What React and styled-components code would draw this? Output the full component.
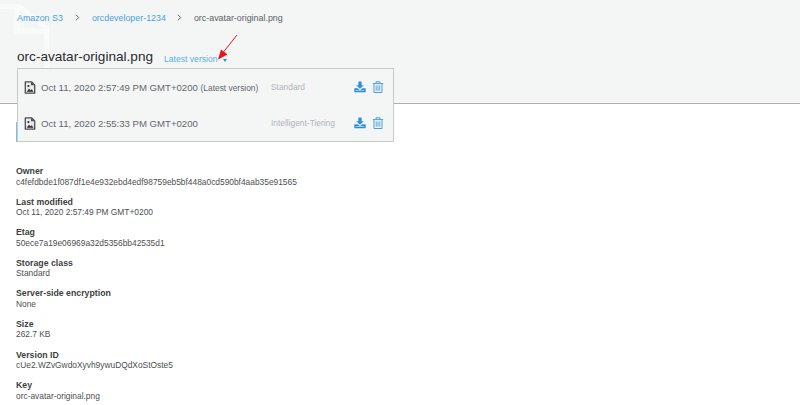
import React from "react";
import styled, { createGlobalStyle } from "styled-components";

const Global = createGlobalStyle`
  html, body { margin: 0; padding: 0; background: #fff; }
  body { font-family: "Liberation Sans", Arial, sans-serif; color: #444; }
`;
const Page = styled.div`
  position: relative;
  width: 800px;
  height: 405px;
  overflow: hidden;
  background: #fff;
`;
const Header = styled.header`
  position: relative;
  height: 104px;
  box-sizing: border-box;
  background: #f4f6f6;
  border-bottom: 1px solid #aab0b3;
  padding: 12px 17px 0;
`;
const Watermark = styled.svg`
  position: absolute;
  left: 0;
  top: 0;
  width: 60px;
  height: 70px;
`;
const Crumbs = styled.nav`
  position: relative;
  display: flex;
  align-items: center;
  height: 11px;
  font-size: 8.9px;
  white-space: nowrap;
`;
const Crumb = styled.span`
  color: ${(p) => (p.$current ? "#5c6164" : "#4aa2dc")};
`;
const Chevron = styled.svg`
  width: 5px;
  height: 7px;
  margin: 0 ${(p) => p.$gap}px;
`;
const TitleRow = styled.div`
  position: relative;
  display: flex;
  align-items: baseline;
  margin-top: 26px;
`;
const Title = styled.h1`
  margin: 0;
  font-size: 13.6px;
  font-weight: 400;
  color: #2a2c2e;
  white-space: nowrap;
`;
const VersionLink = styled.span`
  position: relative;
  top: 1px;
  margin-left: 11px;
  font-size: 8.6px;
  color: #5aaee4;
  white-space: nowrap;
`;
const Caret = styled.span`
  display: inline-block;
  width: 0;
  height: 0;
  margin-left: 5px;
  vertical-align: 0;
  border-left: 2.5px solid transparent;
  border-right: 2.5px solid transparent;
  border-top: 3px solid #2f8fcf;
`;
const Stripe = styled.div`
  position: absolute;
  left: 16px;
  top: 122px;
  width: 2px;
  height: 20px;
  background: #7cc0e8;
`;
const Menu = styled.div`
  position: absolute;
  left: 17px;
  top: 68px;
  width: 377px;
  height: 74px;
  box-sizing: border-box;
  background: #f4f6f6;
  border: 1px solid #c6cacb;
  display: flex;
  flex-direction: column;
`;
const Version = styled.div`
  flex: 1;
  display: flex;
  align-items: center;
  padding-left: 6px;
  font-size: 9.6px;
  color: #63676a;
  white-space: nowrap;
`;
const FileIcon = styled.svg`
  width: 12px;
  height: 13px;
  margin-right: 5px;
  flex: none;
`;
const Stamp = styled.span`
  width: 230px;
  flex: none;
`;
const Note = styled.span`
  font-size: 8.4px;
`;
const Storage = styled.span`
  width: 83px;
  flex: none;
  font-size: 8.4px;
  color: #b0b5b8;
`;
const ActionIcon = styled.svg`
  width: 12px;
  height: 12px;
  flex: none;
  margin-right: ${(p) => p.$gap}px;
`;
const Details = styled.dl`
  margin: 0;
  padding: 62px 16px 0;
  font-size: 8.4px;
  line-height: 10.5px;
`;
const Item = styled.div`
  height: 30.6px;
`;
const Label = styled.dt`
  font-weight: 700;
  font-size: 8.75px;
  color: #3d3f41;
`;
const Value = styled.dd`
  margin: 0;
  color: #4c4f51;
`;
const Arrow = styled.svg`
  position: absolute;
  left: 214px;
  top: 33px;
  width: 26px;
  height: 30px;
`;

function ImageFile() {
  return (
    <FileIcon viewBox="0 0 12 13">
      <path d="M1.3 .8h6.2l3.2 3.2v8.2H1.3z" fill="#e8eaea" stroke="#4a4d4f" strokeWidth="1.3" strokeLinejoin="round" />
      <path d="M2.6 10.8l2.4-3 1.6 1.5 1.2-1 1.7 2.5z" fill="#2d2f31" />
      <circle cx="4.4" cy="5" r="1.1" fill="#2d2f31" />
      <path d="M7 1v3.2h3.2z" fill="#4a4d4f" />
    </FileIcon>
  );
}
function Download() {
  return (
    <ActionIcon viewBox="0 0 12 12" $gap={6}>
      <path d="M4.4 .5h3.2v3.7h2.2L6 7.8 2.2 4.2h2.2z" fill="#2b90d9" />
      <path d="M.3 7.3h3.4L6 9.2l2.3-1.9h3.4v3.9H.3z" fill="#2b90d9" />
      <rect x="1.4" y="9.2" width="9" height=".7" fill="#bfe0f5" />
    </ActionIcon>
  );
}
function Trash() {
  return (
    <ActionIcon viewBox="0 0 12 12" $gap={0}>
      <path d="M.8 2.6h10.4M4 2.4V.8h4v1.6" fill="none" stroke="#4a9fdc" strokeWidth="1" />
      <path d="M2 2.8v8.7h8V2.8" fill="none" stroke="#4a9fdc" strokeWidth="1" />
      <path d="M4.2 4.4v5.4M6 4.4v5.4M7.8 4.4v5.4" fill="none" stroke="#4a9fdc" strokeWidth=".9" />
    </ActionIcon>
  );
}
function Sep({ gap }) {
  return (
    <Chevron viewBox="0 0 5 7" $gap={gap}>
      <path d="M1 .8l2.7 2.7L1 6.2" fill="none" stroke="#5f6366" strokeWidth="1" />
    </Chevron>
  );
}

const versions = [
  { stamp: "Oct 11, 2020 2:57:49 PM GMT+0200", note: "(Latest version)", storage: "Standard" },
  { stamp: "Oct 11, 2020 2:55:33 PM GMT+0200", storage: "Intelligent-Tiering" },
];
const details = [
  ["Owner", "c4fefdbde1f087df1e4e932ebd4edf98759eb5bf448a0cd590bf4aab35e91565"],
  ["Last modified", "Oct 11, 2020 2:57:49 PM GMT+0200"],
  ["Etag", "50ece7a19e06969a32d5356bb42535d1"],
  ["Storage class", "Standard"],
  ["Server-side encryption", "None"],
  ["Size", "262.7 KB"],
  ["Version ID", "cUe2.WZvGwdoXyvh9ywuDQdXoStOste5"],
  ["Key", "orc-avatar-original.png"],
];

export default function App() {
  return (
    <Page>
      <Global />
      <Header>
        <Watermark viewBox="0 0 60 70">
          <path d="M0 6.5h20L46.5 28v40" fill="none" stroke="#f9fafa" strokeWidth="5" />
          <path d="M17 8v23h29" fill="none" stroke="#f9fafa" strokeWidth="5" />
        </Watermark>
        <Crumbs>
          <Crumb>Amazon S3</Crumb>
          <Sep gap={12} />
          <Crumb>orcdeveloper-1234</Crumb>
          <Sep gap={11.5} />
          <Crumb $current>orc-avatar-original.png</Crumb>
        </Crumbs>
        <TitleRow>
          <Title>orc-avatar-original.png</Title>
          <VersionLink>
            Latest version
            <Caret />
          </VersionLink>
        </TitleRow>
      </Header>
      <Stripe />
      <Menu>
        {versions.map((v) => (
          <Version key={v.stamp}>
            <ImageFile />
            <Stamp>
              {v.stamp} {v.note && <Note>{v.note}</Note>}
            </Stamp>
            <Storage>{v.storage}</Storage>
            <Download />
            <Trash />
          </Version>
        ))}
      </Menu>
      <Arrow viewBox="0 0 26 30">
        <path d="M23 2L9.5 19" stroke="#e8141c" strokeWidth="1" fill="none" />
        <path d="M4 26.5L7 16.5l6.5 5z" fill="#e8141c" />
      </Arrow>
      <Details>
        {details.map(([k, v]) => (
          <Item key={k}>
            <Label>{k}</Label>
            <Value>{v}</Value>
          </Item>
        ))}
      </Details>
    </Page>
  );
}
